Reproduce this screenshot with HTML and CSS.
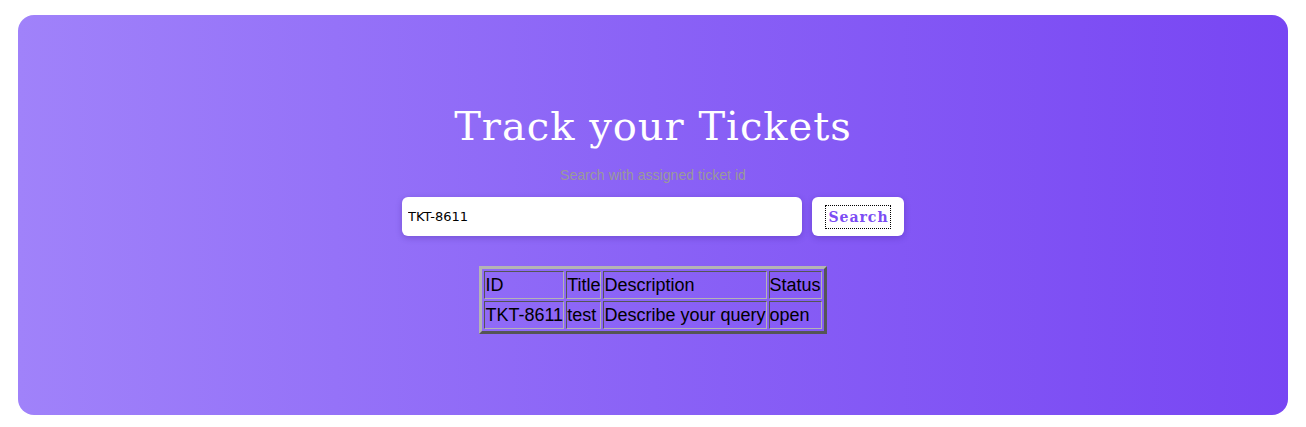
FILE: index.html
```html
<!DOCTYPE html>
<html>
<head>
<meta charset="utf-8">
<title>Track your Tickets</title>
<link rel="stylesheet" href="styles.css">
</head>
<body>
<div class="hero">
  <h1 class="title">Track your Tickets</h1>
  <p class="subtitle">Search with assigned ticket id</p>
  <div class="search-row">
    <input class="search-input" type="text" value="TKT-8611">
    <button class="search-btn"><span class="search-label">Search</span></button>
  </div>
  <table class="tickets">
    <tr><td>ID</td><td>Title</td><td>Description</td><td>Status</td></tr>
    <tr><td>TKT-8611</td><td>test</td><td>Describe your query</td><td>open</td></tr>
  </table>
</div>
</body>
</html>
```
FILE: styles.css
```css
html, body { margin: 0; padding: 0; background: #fff; }
body { padding: 15px 18px 12px 18px; }
.hero {
  height: 400px;
  box-sizing: border-box;
  border-radius: 16px;
  background: linear-gradient(90deg, #a082fa 0%, #8a62f6 50%, #7846f3 100%);
  display: flex;
  flex-direction: column;
  align-items: center;
  padding-top: 88px;
}
.title {
  margin: 0;
  font-family: "DejaVu Serif", serif;
  font-weight: normal;
  font-size: 40px;
  line-height: 47px;
  color: #fff;
  letter-spacing: 1px;
}
.subtitle {
  margin: 17px 0 14px 0;
  font-family: "Liberation Sans", Arial, sans-serif;
  font-size: 14px;
  line-height: 16px;
  color: #9a9a9a;
  letter-spacing: 0.05px;
}
.search-row { display: flex; gap: 10px; }
.search-input {
  width: 400px;
  height: 39px;
  box-sizing: border-box;
  border: none;
  border-radius: 6px;
  padding: 0 6px;
  font-family: "DejaVu Sans", sans-serif;
  font-size: 13px;
  color: #000;
  background: #fff;
  box-shadow: 0 2px 6px rgba(40, 10, 120, 0.25);
  outline: none;
}
.search-btn {
  width: 92px;
  height: 39px;
  border: none;
  border-radius: 6px;
  background: #fff;
  box-shadow: 0 2px 6px rgba(40, 10, 120, 0.25);
  display: flex;
  align-items: center;
  justify-content: center;
  padding: 0;
  cursor: pointer;
}
.search-label {
  font-family: "DejaVu Serif", serif;
  font-weight: bold;
  font-size: 14px;
  letter-spacing: 1px;
  color: #7c4cf4;
  border: 1px dotted #000;
  padding: 2px 1px 2px 2px;
  line-height: 18px;
}
.tickets {
  margin-top: 30px;
  font-family: "Liberation Sans", Arial, sans-serif;
  font-size: 18px;
  color: #000;
  border-style: solid;
  border-width: 3px;
  border-color: #b4b4b4 #555 #555 #b4b4b4;
  border-spacing: 2px;
}
.tickets td {
  padding: 1px 0;
  line-height: 24px;
  border-style: solid;
  border-width: 1px;
  border-color: #555 #b4b4b4 #b4b4b4 #555;
}
```
